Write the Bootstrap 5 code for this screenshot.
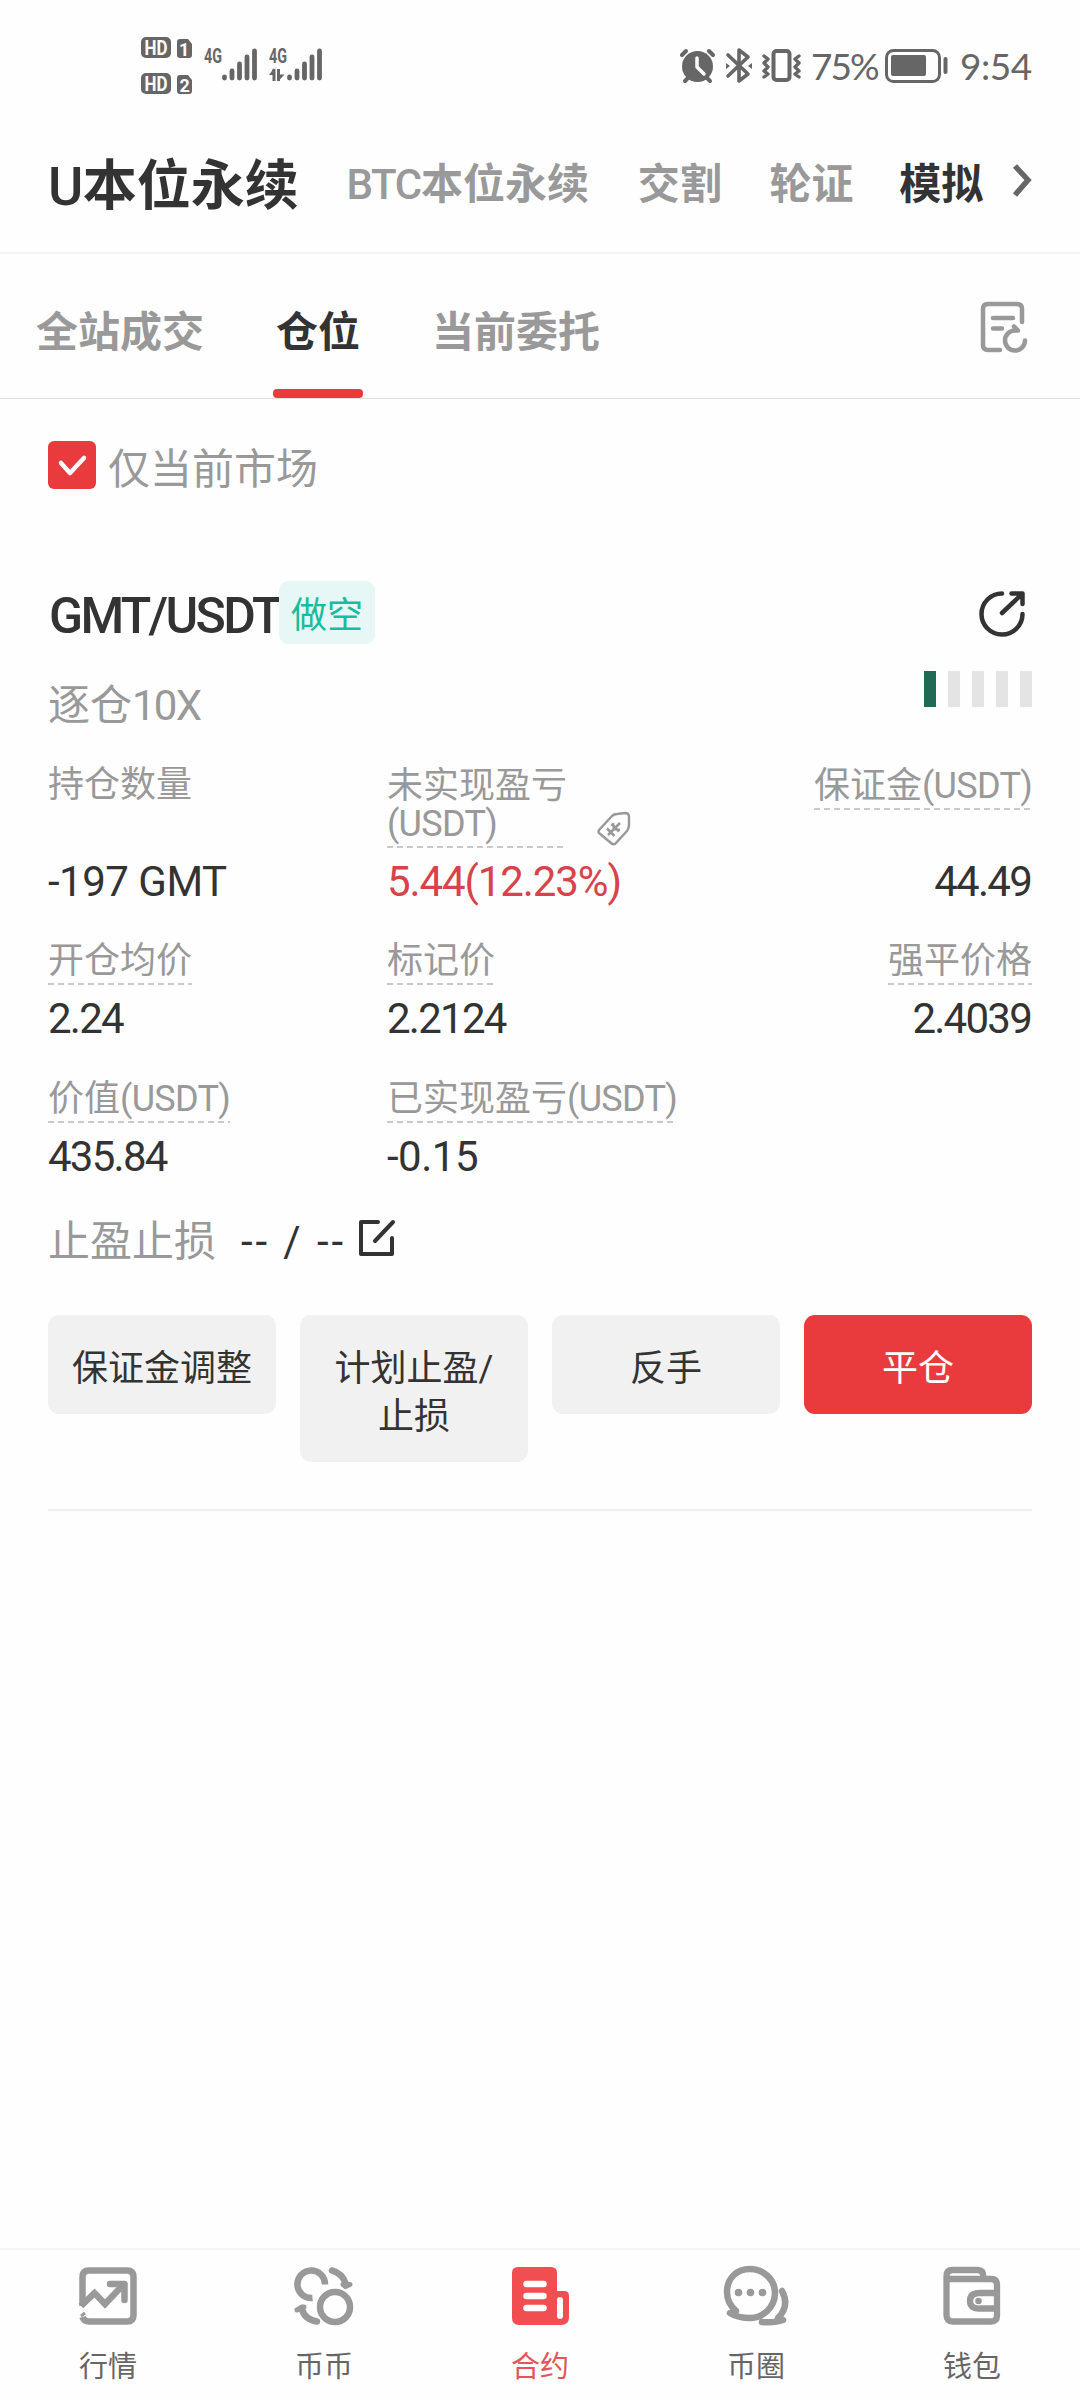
<!DOCTYPE html>
<html lang="zh-CN">
<head>
<meta charset="utf-8">
<meta name="viewport" content="width=device-width, initial-scale=1">
<title>U本位永续</title>
<link href="https://cdn.jsdelivr.net/npm/bootstrap@5.3.0/dist/css/bootstrap.min.css" rel="stylesheet">
<style>
body{font-family:Roboto,"Noto Sans CJK SC",sans-serif;color:#333;background:#fefefe;font-size:36px;line-height:1}
svg{display:block;flex:none;overflow:visible}
.screen{width:1080px;height:2400px;overflow:hidden}
.muted{color:#999}
.ink{color:#333}
.status{height:114px;padding:0 49px 0 141px;color:#666}
.status-left{padding-top:37px}
.status-right{padding-top:42px;font-family:Lato,sans-serif;font-size:37px;line-height:48px}
.markets{height:140px;padding:0 46px 0 48px;border-bottom:2px solid #f4f4f4;font-size:42px;font-weight:700}
.markets span{line-height:60px;white-space:nowrap;padding-top:4px}
.markets i,.lat{font-style:normal}
.markets i{font-weight:500;letter-spacing:-1.300px}
.markets .current{font-size:54px;padding-top:8px;color:#333}
.markets .current i{letter-spacing:-.5px}
.tabs{height:145px;padding:0 53px 0 36px;border-bottom:1px solid #e0e0e0;font-size:42px;font-weight:700}
.tabs span{line-height:60px;padding-top:49px;white-space:nowrap}
.tabs .picked{position:relative;padding-left:3px;width:90px}
.tabs .picked::after{content:"";position:absolute;left:0;bottom:0;width:90px;height:9px;border-radius:4px;background:#e93b3d}
.panel{padding:42px 48px 0}
.tick{width:48px;height:48px;border-radius:6px;background:#e93b3d}
.only{font-size:42px;line-height:58px;margin-left:12px}
.pair{height:63px;margin-top:92px}
.pair-name{font-size:50px;font-weight:500;letter-spacing:-2.65px;width:231px;line-height:70px;white-space:nowrap;padding-left:1px}
.side{width:96px;height:63px;border-radius:9px;background:#e6f7f5;color:#1abc9c;line-height:71px}
.mode{height:94px;padding-top:27px}
.mode-name{font-size:42px;line-height:60px;padding-top:5px}
.level b{display:block;width:12px;height:36px;background:#e4e4e4}
.level b:first-child{background:#206955}
.stat{width:339px}
.stat-mid{width:400px}
.grid1{min-height:140px}
.tag-l{line-height:38px;display:inline-block;white-space:nowrap;padding-top:2px}
.lat{letter-spacing:-.7px}
.dots{padding-bottom:5px;background:repeating-linear-gradient(90deg,#c9c9c9 0 6px,transparent 6px 10px) left bottom/100% 2px no-repeat}
.num{font-size:42px;line-height:50px;letter-spacing:-1.75px;margin-top:9px;margin-bottom:-2px;white-space:nowrap}
.text-end .num{margin-right:1px}
.gain{color:#d8434b}
.num.wide{letter-spacing:-1.1px}
.num.wider{letter-spacing:-.5px}
.tpsl{height:60px;margin-top:30px;font-size:42px;line-height:63px}
.act,.act:hover{width:228px;padding:30px 10px 21px;border:0;border-radius:11px;background:#f1f1f1;color:#333;font-size:36px;line-height:48px}
.act.close-pos{background:#e93b3d;color:#fff}
.acts{margin-top:45px;height:196px;border-bottom:2px solid #eee}
.dock{height:152px;border-top:2px solid #f4f4f4;font-size:29px;color:#666;padding-top:17px}
.dock div{width:216px}
.dock span{line-height:36px;margin-top:24px}
.dock .on{color:#e2555a}
</style>
</head>
<body>
<div class="screen d-flex flex-column">
  <header class="status d-flex justify-content-between align-items-start">
    <div class="status-left d-flex">
      <svg width="182" height="60" fill="#666" font-family="Roboto,sans-serif" font-weight="700">
        <rect x="0" y="0" width="30" height="21" rx="5"/><rect x="0" y="36" width="30" height="21" rx="5"/>
        <path d="M39 2h8l4 5v11q0 3-3 3h-9q-3 0-3-3V5q0-3 3-3zM39 38h8l4 5v11q0 3-3 3h-9q-3 0-3-3V41q0-3 3-3z"/>
        <g fill="#fff" font-size="20"><text x="3.500" y="17.500" textLength="23" lengthAdjust="spacingAndGlyphs">HD</text><text x="3.500" y="53.500" textLength="23" lengthAdjust="spacingAndGlyphs">HD</text><text x="38" y="18.500" font-size="18">1</text><text x="38.500" y="54.500" font-size="18">2</text></g>
        <text x="63" y="26" font-size="20" textLength="18" lengthAdjust="spacingAndGlyphs">4G</text><text x="128" y="26" font-size="20" textLength="18" lengthAdjust="spacingAndGlyphs">4G</text>
        <g stroke="#666" stroke-width="4.800" stroke-linecap="round"><path id="sig" d="M83.500 41v-1M91 41V34M98.500 41V27M106 41V20M113.500 41V14"/><use href="#sig" x="65"/></g>
        <path d="M133 32v12M137.500 32v12" stroke="#666" stroke-width="3"/><path d="M133 31l-5 7h5zM137 44.500l6.500-7H137z"/>
      </svg>
    </div>
    <div class="status-right d-flex align-items-center">
      <svg width="126" height="36" viewBox="680 48 126 36" fill="none" stroke="#666" stroke-width="4" stroke-linecap="round" stroke-linejoin="round">
        <circle cx="697.500" cy="66.500" r="15.500" fill="#666" stroke="none"/><path d="M682 55l4-4M713 55l-4-4M685 81l4-4M710 81l-4-4"/><path d="M697 58v9l7 7" stroke="#fefefe" stroke-width="3.500"/>
        <path d="M728 55l20 19-9 7V50l9 7-20 19" stroke-width="3.600"/><path d="M726 63l4 3-4 3zM752 63l-4 3 4 3z" fill="#666" stroke="none"/>
        <rect x="773.500" y="51" width="16" height="29" rx="3"/><path d="M764 56l4 3-4 4 4 4-4 4 4 3-4 3M799 56l-4 3 4 4-4 4 4 4-4 3 4 3" stroke-width="3.400"/>
      </svg>
      <span style="width:73px;margin-left:5px;letter-spacing:-2px">75%</span>
      <svg width="64" height="34" viewBox="884 49 64 34" fill="none" stroke="#666" stroke-width="3"><rect x="886.500" y="50.500" width="53" height="31" rx="7"/><rect x="891" y="55" width="35" height="21" rx="2" fill="#666" stroke="none"/><path d="M945.500 59v13" stroke-width="4" stroke-linecap="round"/></svg>
      <span style="width:71px;margin-left:12px;letter-spacing:-.5px">9:54</span>
    </div>
  </header>

  <nav class="markets d-flex align-items-center muted">
    <span class="current" style="width:299px"><i>U</i>本位永续</span>
    <span style="width:292px"><i>BTC</i>本位永续</span>
    <span style="width:132px">交割</span>
    <span style="width:130px">轮证</span>
    <span class="ink" style="width:113px">模拟</span>
    <svg style="margin-top:-4px" width="22" height="34" fill="none" stroke="#666" stroke-width="5.500"><path d="M3 2l13 14L3 31"/></svg>
  </nav>

  <nav class="tabs d-flex muted">
    <span>全站成交</span>
    <span class="picked ink" style="margin-left:69px">仓位</span>
    <span style="margin-left:69px">当前委托</span>
    <svg class="ms-auto" style="margin-top:48px" width="47" height="50" fill="none" stroke="#999" stroke-width="4.500" stroke-linecap="round" stroke-linejoin="round"><path d="M20 48H8q-5 0-5-5V7q0-5 5-5h29q5 0 5 5v13M13 16h20M13 26.500h9"/><path d="M45 38.500A10 10 0 1 1 35 28.500h3l-4-4"/></svg>
  </nav>

  <main class="panel flex-grow-1">
    <div class="d-flex" style="height:48px">
      <div class="tick"><svg width="48" height="48" fill="none" stroke="#fff" stroke-width="4.500" stroke-linecap="round" stroke-linejoin="round"><path d="M13 22l9 10 14-15"/></svg></div>
      <span class="only muted">仅当前市场</span>
    </div>
    <div class="pair d-flex">
      <span class="pair-name">GMT/USDT</span><span class="side text-center">做空</span>
      <svg class="ms-auto me-1" style="margin-top:9px" width="50" height="50" fill="none" stroke="#333" stroke-width="4.500" stroke-linecap="round" stroke-linejoin="round"><path d="M24 3.500A20.500 20.500 0 1 0 44.500 24M24 23L44 4M33.500 3.500H44.500V14"/></svg>
    </div>
    <div class="mode d-flex justify-content-between">
      <span class="mode-name muted">逐仓<span class="num">10X</span></span>
      <div class="level d-flex" style="gap:12px"><b></b><b></b><b></b><b></b><b></b></div>
    </div>

    <div class="grid1 d-flex align-items-end" style="margin-top:26px">
      <div class="stat"><div class="tag-l muted" style="margin-bottom:44px">持仓数量</div><div class="num wider">-197 GMT</div></div>
      <div class="stat-mid"><div class="d-flex align-items-end muted"><div class="tag-l dots" style="width:176px">未实现盈亏<br><span class="lat">(USDT)</span></div>
        <svg style="margin:0 0 2px 34px" width="34" height="34" fill="none" stroke="#999" stroke-width="2.500" stroke-linejoin="round"><path d="M2 18L15 4q2-2 5-2l8-1q4 0 4 4v8q0 3-2 6L18 32q-2 1-4-1L2 21q-1-1 0-3z"/><path d="M11 23L23 11M10 16.500l7.500 7.500M14.500 12l7.500 7.500M17 17l-1-6M17 17l6 1"/></svg></div>
        <div class="num gain wide">5.44(12.23%)</div></div>
      <div class="ms-auto text-end"><div class="tag-l muted dots" style="margin-bottom:38px">保证金<span class="lat">(USDT)</span></div><div class="num">44.49</div></div>
    </div>
    <div class="d-flex" style="margin-top:35px">
      <div class="stat"><div class="tag-l muted dots">开仓均价</div><div class="num">2.24</div></div>
      <div class="stat-mid"><div class="tag-l muted dots">标记价</div><div class="num">2.2124</div></div>
      <div class="ms-auto text-end"><div class="tag-l muted dots">强平价格</div><div class="num">2.4039</div></div>
    </div>
    <div class="d-flex" style="margin-top:36px">
      <div class="stat"><div class="tag-l muted dots">价值<span class="lat">(USDT)</span></div><div class="num">435.84</div></div>
      <div class="stat-mid"><div class="tag-l muted dots">已实现盈亏<span class="lat">(USDT)</span></div><div class="num wider">-0.15</div></div>
    </div>
    <div class="tpsl d-flex"><span class="muted" style="width:193px">止盈止损</span><span style="width:117px;white-space:nowrap;letter-spacing:2.900px">-- / --</span>
      <svg style="margin-top:9px" width="38" height="38" fill="none" stroke="#333" stroke-width="4" stroke-linecap="round" stroke-linejoin="round"><path d="M20 3H3v32h31V19M17 22L35 3"/></svg></div>
    <div class="acts d-flex align-items-start gap-4">
      <button class="btn act">保证金调整</button><button class="btn act">计划止盈/<br>止损</button><button class="btn act">反手</button><button class="btn act close-pos">平仓</button>
    </div>
  </main>

  <footer class="dock d-flex text-center">
    <div class="d-flex flex-column align-items-center"><svg width="58" height="58" fill="none" stroke="#999" stroke-width="6.500"><path d="M3.500 39V10q0-6.500 6.500-6.500h38q6.500 0 6.500 6.500v38q0 6.500-6.500 6.500H10Q5 54.500 3.500 50"/><path d="M2 39l13.500-13L26 37l19-20"/><path d="M31 17h14.500v16" stroke-linecap="round" stroke-linejoin="round"/><path d="M2 49l4-3" stroke-width="3"/></svg><span>行情</span></div>
    <div class="d-flex flex-column align-items-center"><svg width="60" height="58" fill="none" stroke="#999" stroke-width="6.500" stroke-linejoin="round"><circle cx="41" cy="40" r="15"/><path d="M31 17.500A13.800 13.800 0 1 0 18.500 31"/><path d="M38 3.500Q48 6 52 17M23 54.500Q10 52 8 42" stroke-linecap="round"/><path d="M49 17.500h7l-4.500 2zM10 40l-7 3 5-3z" stroke-width="5"/></svg><span>币币</span></div>
    <div class="d-flex flex-column align-items-center on"><svg width="57" height="58"><path d="M6 0h33q6 0 6 6v18h7q5 0 5 5v21q0 8-8 8H7q-7 0-7-7V6q0-6 6-6z" fill="#f14e51"/><path d="M14.500 17h17M14.500 29h17M14.500 41h17" stroke="#fff" stroke-width="6.500" stroke-linecap="round"/><path d="M48 33v16" stroke="#fff" stroke-width="6" stroke-linecap="round"/></svg><span>合约</span></div>
    <div class="d-flex flex-column align-items-center"><svg width="66" height="58" fill="none" stroke="#999" stroke-width="6.500" stroke-linecap="round" stroke-linejoin="round"><path d="M7 46q5 0 6-2-9-8-9-19C4 11 14 2 27 2s25 10 25 24-12 25-25 25q-12 0-20-5z"/><path d="M59 24q8 15-4 27l5 2q-8 3-21 2" /><g fill="#999" stroke="none"><circle cx="15.500" cy="25.500" r="3.800"/><circle cx="27.500" cy="25.500" r="3.800"/><circle cx="39.500" cy="25.500" r="3.800"/></g></svg><span>币圈</span></div>
    <div class="d-flex flex-column align-items-center"><svg width="58" height="58" fill="none" stroke="#999" stroke-width="6.300" stroke-linejoin="round"><path d="M3.500 12v36q0 6.500 6.500 6.500h38q6 0 6-6V18q0-6-6-6H3.500V9q0-6 6-6h25q6 0 6 7v2"/><path d="M53 26H37q-10 0-10 8t10 7.500h16"/><circle cx="35.500" cy="34" r="3.300" fill="#999" stroke="none"/></svg><span>钱包</span></div>
  </footer>
</div>
<script src="https://cdn.jsdelivr.net/npm/bootstrap@5.3.0/dist/js/bootstrap.bundle.min.js"></script>
</body>
</html>
